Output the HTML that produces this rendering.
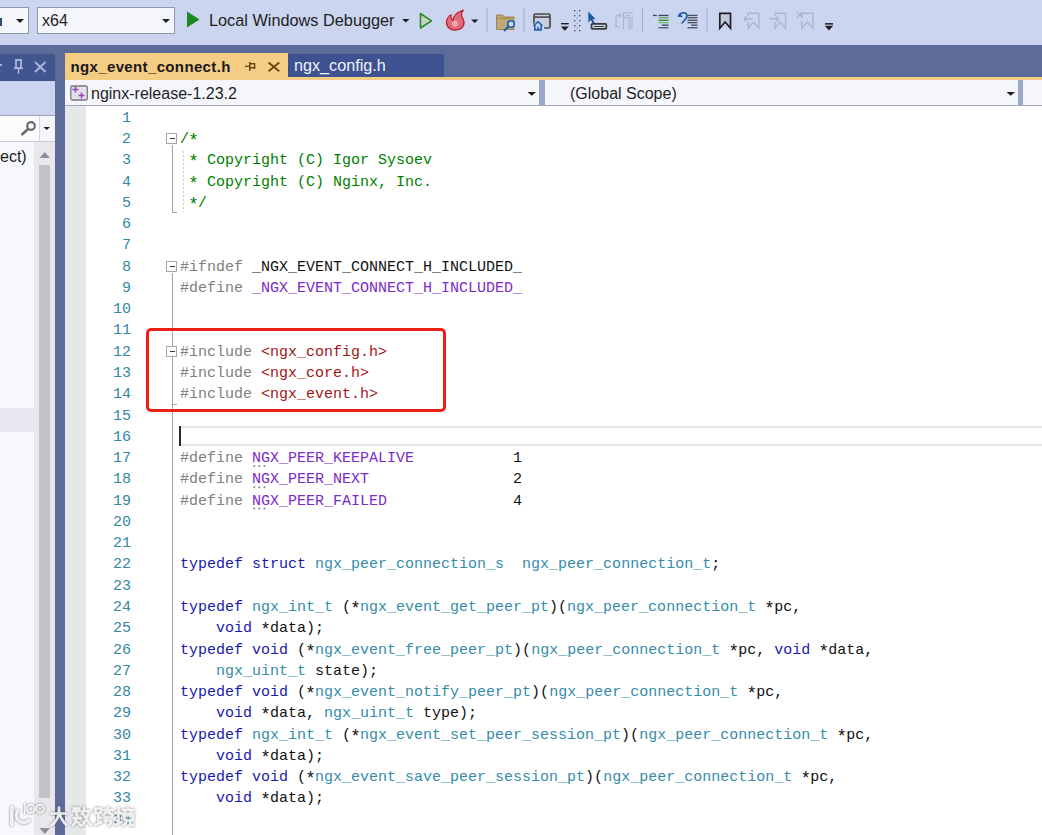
<!DOCTYPE html>
<html><head><meta charset="utf-8">
<style>
*{margin:0;padding:0;box-sizing:border-box}
html,body{width:1042px;height:835px;overflow:hidden;background:#5D6B99;position:relative;font-family:"Liberation Sans",sans-serif}
.a{position:absolute}
#tb{left:0;top:0;width:1042px;height:45px;background:#CCD5F0}
.combo{position:absolute;background:#F5F6FB;border:1px solid #8F97AE}
.arr{position:absolute;width:0;height:0;border-left:4px solid transparent;border-right:4px solid transparent;border-top:4px solid #1E1E1E}
.sep{position:absolute;width:1px;background:#A6AFCC}
.ui{position:absolute;font-size:16px;color:#1E1E1E;white-space:nowrap;line-height:20px}
/* editor */
#ed{left:65px;top:106px;width:977px;height:729px;background:#FFFFFF}
#mg{left:65px;top:106px;width:21px;height:729px;background:#E6E7E8}
.ln{position:absolute;left:86px;width:45px;text-align:right;font-family:"Liberation Mono",monospace;font-size:15px;line-height:21.27px;color:#3487A4;white-space:pre}
.cl{position:absolute;left:180px;font-family:"Liberation Mono",monospace;font-size:15px;line-height:21.27px;white-space:pre;color:#000}
.cm{color:#008000}.pp{color:#808080}.mc{color:#7A2BC8}.st{color:#A31515}.kw{color:#1A1AAA}.ty{color:#368CAA}.tx{color:#111}
.as{font-style:normal;display:inline-block;width:9px;text-align:center;font-size:17.5px;line-height:0;vertical-align:baseline;position:relative;top:3px;left:-0.8px}
.ob{position:absolute;width:11px;height:11px;border:1px solid #A8A8A8;background:#fff}
.ob:after{content:"";position:absolute;left:2.5px;top:4px;width:5px;height:1.3px;background:#3A3A3A}
</style></head><body>

<!-- toolbar -->
<div id="tb" class="a"></div>
<div class="combo" style="left:-10px;top:7px;width:39px;height:27px"></div>
<div class="a" style="left:0;top:18px;width:1.6px;height:8px;background:#2C4A80"></div>
<div class="arr" style="left:16px;top:19px"></div>
<div class="combo" style="left:37px;top:7px;width:138px;height:27px"></div>
<div class="ui" style="left:42px;top:11px">x64</div>
<div class="arr" style="left:162px;top:19px"></div>

<svg class="a" style="left:0;top:0" width="1042" height="45" viewBox="0 0 1042 45">
  <!-- solid play -->
  <path d="M187 11.5 L199.5 19.5 L187 27.5 Z" fill="#1E8A1E"/>
  <!-- outline play -->
  <path d="M420.5 13.5 L431.5 20.8 L420.5 28 Z" fill="#C5D2C8" stroke="#2A8A2A" stroke-width="1.6" stroke-linejoin="round"/>
  <!-- flame -->
  <path d="M455 30 C449 30 446 25.5 446.5 21.5 C447 18 449.5 15.5 451 15 C450.5 17.5 451.5 19.5 453 20.5 C453 16 456.5 12.5 463.5 10 C460.5 13 461 16 463 19 C465 22.5 464.5 30 455 30 Z" fill="#E06C7A" stroke="#C0202E" stroke-width="1.3"/>
  <circle cx="455" cy="23.5" r="3" fill="#F0A5AE"/>
  <!-- separators -->
  <rect x="486.5" y="8" width="1" height="24" fill="#A0AAC8"/>
  <rect x="523.5" y="8" width="1" height="24" fill="#A0AAC8"/>
  <rect x="642" y="8" width="1" height="24" fill="#A0AAC8"/>
  <rect x="706.5" y="8" width="1" height="24" fill="#A0AAC8"/>
  <!-- folder -->
  <path d="M496.5 15 h6 l2 2 h9.5 v12.5 h-17.5 z" fill="#BFA878" stroke="#9A8450" stroke-width="1"/>
  <rect x="496.5" y="17.5" width="17.5" height="1.5" fill="#A89058"/>
  <circle cx="511" cy="24" r="3.3" fill="#CCD5F0" stroke="#1E5AA8" stroke-width="1.6"/>
  <path d="M508.5 26.5 L504 31" stroke="#1E5AA8" stroke-width="1.8"/>
  <!-- window + house -->
  <rect x="534" y="14" width="16" height="14" rx="1.5" fill="#C9CEDF" stroke="#4A4A4A" stroke-width="1.7"/>
  <rect x="534" y="16.3" width="16" height="1.6" fill="#4A4A4A"/>
  <path d="M533 25.8 L538 21.5 L543 25.8 V30.5 H533 Z" fill="#BBD3F0" stroke="#CCD5F0" stroke-width="2.2"/>
  <path d="M533.5 25.8 L538 21.8 L542.5 25.8 M534.8 25 V30 H541.2 V25" fill="#BBD3F0" stroke="#1E5AA8" stroke-width="1.5"/>
  <rect x="537.2" y="26.8" width="1.6" height="3.2" fill="#1E5AA8"/>
  <!-- overflow small -->
  <rect x="561" y="23" width="7.7" height="1.4" fill="#1E1E1E"/>
  <path d="M560.8 26.6 h8 l-4 4.2 z" fill="#1E1E1E"/>
  <!-- gripper -->
  <g fill="#50545E">
    <rect x="574" y="10" width="1.4" height="1.4"/><rect x="579" y="10" width="1.4" height="1.4"/>
    <rect x="574" y="15" width="1.4" height="1.4"/><rect x="579" y="15" width="1.4" height="1.4"/>
    <rect x="574" y="20" width="1.4" height="1.4"/><rect x="579" y="20" width="1.4" height="1.4"/>
    <rect x="574" y="25" width="1.4" height="1.4"/><rect x="579" y="25" width="1.4" height="1.4"/>
    <rect x="574" y="30" width="1.4" height="1.4"/><rect x="579" y="30" width="1.4" height="1.4"/>
  </g>
  <g fill="#9AA6CC">
    <rect x="576.5" y="12.5" width="1.4" height="1.4"/><rect x="576.5" y="17.5" width="1.4" height="1.4"/>
    <rect x="576.5" y="22.5" width="1.4" height="1.4"/><rect x="576.5" y="27.5" width="1.4" height="1.4"/>
  </g>
  <!-- cursor icon -->
  <path d="M588.3 11.5 L588.3 22.5 L590.8 20 L593.3 24.5 L595 23.6 L592.6 19.2 L595.6 19 Z" fill="#1E5AA8"/>
  <rect x="591.5" y="23.8" width="14.8" height="5" rx="1" fill="#CCD5F0" stroke="#3A3A3A" stroke-width="1.8"/>
  <rect x="594" y="26" width="10" height="1" fill="#3A3A3A"/>
  <!-- disabled -->
  <g stroke="#AEB6CC" stroke-width="1.3" fill="none">
    <path d="M619.8 26.6 H616 V15.6 H620.5"/><path d="M619 13.3 L621.3 15.6 L619 17.9"/>
    <path d="M623.5 29.5 V12.8 H633"/>
    <path d="M625.5 15.6 h5 M623.5 17.8 h9.5 M628 20.5 h5 M628 22.9 h5 M628 25.5 h5 M628 27.9 h5"/>
  </g>
  <!-- indent icon -->
  <g>
    <rect x="653" y="14.8" width="3.8" height="1.3" fill="#3E4250"/>
    <rect x="658.5" y="14.8" width="10" height="1.3" fill="#3E4250"/>
    <rect x="658.5" y="17.1" width="10" height="1.3" fill="#5CA85C"/>
    <rect x="658.5" y="19.7" width="10" height="1.3" fill="#2E8A2E"/>
    <rect x="658.5" y="22" width="10" height="1.3" fill="#6CC06C"/>
    <rect x="662" y="24.5" width="6.5" height="1.3" fill="#3E4250"/>
    <rect x="658.5" y="27.1" width="10" height="1.3" fill="#50586A"/>
  </g>
  <!-- undo-ish icon -->
  <path d="M679 15.5 C681 12 686.5 11.5 687 15.5 C687.3 18 684.5 20.5 681.5 23.5" stroke="#1E5AA8" stroke-width="1.6" fill="none"/>
  <path d="M677.5 16.8 L683 17.3 L679.5 13 Z" fill="#1E5AA8"/>
  <g fill="#4A4E5C">
    <rect x="687.5" y="14.8" width="10" height="1.3"/><rect x="687.5" y="17.1" width="10" height="1.3"/>
    <rect x="687.5" y="19.7" width="10" height="1.3"/><rect x="687.5" y="22" width="10" height="1.3"/>
    <rect x="691" y="24.5" width="6.5" height="1.3"/><rect x="687.5" y="27.1" width="10" height="1.3"/>
  </g>
  <!-- bookmark -->
  <path d="M719.8 13.3 H730.5 V28.3 L725.15 22 L719.8 28.3 Z" fill="#C3C9DE" stroke="#1E1E1E" stroke-width="1.7" stroke-linejoin="miter"/>
  <!-- disabled bookmarks -->
  <g stroke="#AEB6CC" stroke-width="1.4" fill="none">
    <path d="M748.2 16 V13.3 H758.8 V28.3 L753.5 22 L748.2 28.3 V21.5"/><path d="M744 18.7 h9 M744 18.7 l2.5 -2.5 M744 18.7 l2.5 2.5"/>
    <path d="M775 16 V13.3 H785.6 V28.3 L780.3 22 L775 28.3 V21.5"/><path d="M769.5 18.7 h9.5 M779 18.7 l-2.5 -2.5 M779 18.7 l-2.5 2.5"/>
    <path d="M801.8 18 V13.3 H813 V28.3 L807.4 22 L801.8 28.3 V21"/><path d="M797 12 l5.5 5.5 M802.5 12 l-5.5 5.5"/>
  </g>
  <!-- overflow end -->
  <rect x="825" y="23.1" width="8" height="1.5" fill="#1E1E1E"/>
  <path d="M824.8 25.8 h8.4 l-4.2 4.8 z" fill="#1E1E1E"/>
  <!-- dropdown arrows -->
  <path d="M402 19 h7.5 l-3.75 3.5 z" fill="#1E1E1E"/>
  <path d="M471 19.5 h7.5 l-3.75 3.5 z" fill="#1E1E1E"/>
</svg>
<div class="ui" style="left:209px;top:10px;font-size:16.3px">Local Windows Debugger</div>

<!-- tab well -->
<div class="a" style="left:0;top:54px;width:55px;height:26.5px;background:#41558F"></div>
<svg class="a" style="left:0;top:54px" width="55" height="27" viewBox="0 54 55 27">
  <path d="M-1 64 h3.5 l-1.75 2.5 z" fill="#AEB8E0"/>
  <rect x="16" y="60" width="5" height="8" fill="none" stroke="#AEB8E0" stroke-width="1.8"/>
  <rect x="14" y="67.5" width="9" height="1.6" fill="#AEB8E0"/>
  <rect x="17.8" y="69" width="1.4" height="5" fill="#AEB8E0"/>
  <path d="M35 62 L45.5 72 M45.5 62 L35 72" stroke="#AEB8E0" stroke-width="1.8"/>
</svg>
<div class="a" style="left:65px;top:53px;width:223px;height:27px;background:#F5CC84"></div>
<div class="ui" style="left:70.5px;top:57px;font-weight:bold;font-size:15px;letter-spacing:0.36px;color:#1A1A1A">ngx_event_connect.h</div>
<svg class="a" style="left:240px;top:55px" width="48" height="22" viewBox="240 55 48 22">
  <path d="M245 66.3 h4.5" stroke="#6A4810" stroke-width="1.3"/>
  <path d="M250 63.8 H254.6 V67.8 H250" fill="none" stroke="#6A4810" stroke-width="1.4"/>
  <rect x="253.8" y="66.8" width="1.5" height="2" fill="#6A4810"/>
  <rect x="249" y="62" width="1.6" height="8.8" fill="#6A4810"/>
  <path d="M268.6 62.6 L279.2 71.3 M279.2 62.6 L268.6 71.3" stroke="#6A4810" stroke-width="1.9"/>
</svg>
<div class="a" style="left:288px;top:54px;width:156px;height:24px;background:#3E5191"></div>
<div class="ui" style="left:294px;top:55.3px;color:#F0F2FA;font-size:16.2px">ngx_config.h</div>
<div class="a" style="left:65px;top:77px;width:977px;height:3px;background:#F5CC84"></div>

<!-- left panel -->
<div class="a" style="left:0;top:80.5px;width:55px;height:35px;background:#CCD5F0"></div>
<div class="a" style="left:0;top:115px;width:55px;height:27px;background:#FCFCFC;border-top:1px solid #9AA2B8;border-bottom:1px solid #C8CEE2"></div>
<div class="a" style="left:39px;top:116px;width:1px;height:25px;background:#D4D6E0"></div>
<div class="a" style="left:40px;top:116px;width:15px;height:25px;background:#F5F6FB"></div>
<svg class="a" style="left:0;top:115px" width="55" height="27" viewBox="0 115 55 27">
  <circle cx="31" cy="126" r="3.8" fill="none" stroke="#6A6A6A" stroke-width="2.2"/>
  <path d="M28 129 L21.5 135" stroke="#6A6A6A" stroke-width="2.6"/>
  <path d="M43.5 127 h6.5 l-3.25 3 z" fill="#1E1E1E"/>
</svg>
<div class="a" style="left:0;top:142px;width:55px;height:693px;background:#F6F8FD"></div>
<div class="ui" style="left:0px;top:147px;font-size:16px">ect)</div>
<div class="a" style="left:0;top:408px;width:34px;height:24px;background:#E6E7F0"></div>
<div class="a" style="left:34px;top:142px;width:21px;height:693px;background:#E8E8EC"></div>
<div class="a" style="left:39px;top:165px;width:11px;height:632.5px;background:#C2C3C9"></div>
<svg class="a" style="left:34px;top:145px" width="21" height="15" viewBox="34 145 21 15"><path d="M39.5 158 L50 158 L44.75 152 Z" fill="#8C8FA0"/></svg>
<svg class="a" style="left:34px;top:825px" width="21" height="10" viewBox="34 825 21 10"><path d="M39.5 828 L50 828 L44.75 834 Z" fill="#8C8FA0"/></svg>

<!-- nav bar -->
<div class="a" style="left:65px;top:80px;width:977px;height:26px;background:#F5F6FB;border-bottom:1.5px solid #A0A7BC"></div>
<div class="a" style="left:539px;top:80px;width:5.5px;height:25px;background:#99A8CC"></div>
<div class="a" style="left:1018.3px;top:80px;width:5px;height:25px;background:#99A8CC"></div>
<svg class="a" style="left:65px;top:80px" width="977" height="26" viewBox="65 80 977 26">
  <rect x="70.8" y="86" width="16.5" height="14" rx="1.5" fill="#E2E2E8" stroke="#7A7A7A" stroke-width="1.3"/>
  <path d="M75.5 86.5 v6 M72.5 89.5 h6 M81.5 92.5 v6 M78.5 95.5 h6" stroke="#A040C0" stroke-width="1.5"/>
  <path d="M527.5 92 h8.5 l-4.25 3.8 z" fill="#1E1E1E"/>
  <path d="M1006.5 92 h8.5 l-4.25 3.8 z" fill="#1E1E1E"/>
</svg>
<div class="ui" style="left:91px;top:84px">nginx-release-1.23.2</div>
<div class="ui" style="left:570px;top:84px">(Global Scope)</div>

<!-- editor -->
<div id="ed" class="a"></div>
<div id="mg" class="a"></div>

<!-- outlining -->
<div class="ob" style="left:166px;top:133px"></div>
<div class="a" style="left:172px;top:145px;width:1px;height:67px;background:#A5A5A5"></div>
<div class="a" style="left:172px;top:211.5px;width:5px;height:1px;background:#A5A5A5"></div>
<div class="a" style="left:183px;top:151px;width:1px;height:61px;background-image:linear-gradient(#C8C8C8 50%,transparent 50%);background-size:1px 4px"></div>
<div class="ob" style="left:166px;top:260.5px"></div>
<div class="a" style="left:172px;top:272.5px;width:1px;height:563px;background:#A5A5A5"></div>
<div class="ob" style="left:166px;top:345.5px"></div>
<div class="a" style="left:172px;top:404px;width:5px;height:1px;background:#A5A5A5"></div>

<!-- current line -->
<div class="a" style="left:180px;top:426px;width:870px;height:20px;border-top:2px solid #E3E3EA;border-bottom:2px solid #E3E3EA"></div>
<div class="a" style="left:179px;top:426px;width:2px;height:20px;background:#2A2A2A"></div>

<div class="ln" style="top:107.77px">1</div>
<div class="ln" style="top:129.04px">2</div>
<div class="cl" style="top:129.04px"><span class="cm">/<i class="as">*</i></span></div>
<div class="ln" style="top:150.31px">3</div>
<div class="cl" style="top:150.31px"><span class="cm"> <i class="as">*</i> Copyright (C) Igor Sysoev</span></div>
<div class="ln" style="top:171.58px">4</div>
<div class="cl" style="top:171.58px"><span class="cm"> <i class="as">*</i> Copyright (C) Nginx, Inc.</span></div>
<div class="ln" style="top:192.85px">5</div>
<div class="cl" style="top:192.85px"><span class="cm"> <i class="as">*</i>/</span></div>
<div class="ln" style="top:214.12px">6</div>
<div class="ln" style="top:235.39px">7</div>
<div class="ln" style="top:256.66px">8</div>
<div class="cl" style="top:256.66px"><span class="pp">#ifndef </span><span class="tx">_NGX_EVENT_CONNECT_H_INCLUDED_</span></div>
<div class="ln" style="top:277.93px">9</div>
<div class="cl" style="top:277.93px"><span class="pp">#define </span><span class="mc">_NGX_EVENT_CONNECT_H_INCLUDED_</span></div>
<div class="ln" style="top:299.20px">10</div>
<div class="ln" style="top:320.47px">11</div>
<div class="ln" style="top:341.74px">12</div>
<div class="cl" style="top:341.74px"><span class="pp">#include </span><span class="st">&lt;ngx_config.h&gt;</span></div>
<div class="ln" style="top:363.01px">13</div>
<div class="cl" style="top:363.01px"><span class="pp">#include </span><span class="st">&lt;ngx_core.h&gt;</span></div>
<div class="ln" style="top:384.28px">14</div>
<div class="cl" style="top:384.28px"><span class="pp">#include </span><span class="st">&lt;ngx_event.h&gt;</span></div>
<div class="ln" style="top:405.55px">15</div>
<div class="ln" style="top:426.82px">16</div>
<div class="ln" style="top:448.09px">17</div>
<div class="cl" style="top:448.09px"><span class="pp">#define </span><span class="mc">NGX_PEER_KEEPALIVE</span><span class="tx">           1</span></div>
<div class="ln" style="top:469.36px">18</div>
<div class="cl" style="top:469.36px"><span class="pp">#define </span><span class="mc">NGX_PEER_NEXT</span><span class="tx">                2</span></div>
<div class="ln" style="top:490.63px">19</div>
<div class="cl" style="top:490.63px"><span class="pp">#define </span><span class="mc">NGX_PEER_FAILED</span><span class="tx">              4</span></div>
<div class="ln" style="top:511.90px">20</div>
<div class="ln" style="top:533.17px">21</div>
<div class="ln" style="top:554.44px">22</div>
<div class="cl" style="top:554.44px"><span class="kw">typedef</span><span class="tx"> </span><span class="kw">struct</span><span class="tx"> </span><span class="ty">ngx_peer_connection_s</span><span class="tx">  </span><span class="ty">ngx_peer_connection_t</span><span class="tx">;</span></div>
<div class="ln" style="top:575.71px">23</div>
<div class="ln" style="top:596.98px">24</div>
<div class="cl" style="top:596.98px"><span class="kw">typedef</span><span class="tx"> </span><span class="ty">ngx_int_t</span><span class="tx"> (<i class="as">*</i></span><span class="ty">ngx_event_get_peer_pt</span><span class="tx">)(</span><span class="ty">ngx_peer_connection_t</span><span class="tx"> <i class="as">*</i>pc,</span></div>
<div class="ln" style="top:618.25px">25</div>
<div class="cl" style="top:618.25px"><span class="tx">    </span><span class="kw">void</span><span class="tx"> <i class="as">*</i>data);</span></div>
<div class="ln" style="top:639.52px">26</div>
<div class="cl" style="top:639.52px"><span class="kw">typedef</span><span class="tx"> </span><span class="kw">void</span><span class="tx"> (<i class="as">*</i></span><span class="ty">ngx_event_free_peer_pt</span><span class="tx">)(</span><span class="ty">ngx_peer_connection_t</span><span class="tx"> <i class="as">*</i>pc, </span><span class="kw">void</span><span class="tx"> <i class="as">*</i>data,</span></div>
<div class="ln" style="top:660.79px">27</div>
<div class="cl" style="top:660.79px"><span class="tx">    </span><span class="ty">ngx_uint_t</span><span class="tx"> state);</span></div>
<div class="ln" style="top:682.06px">28</div>
<div class="cl" style="top:682.06px"><span class="kw">typedef</span><span class="tx"> </span><span class="kw">void</span><span class="tx"> (<i class="as">*</i></span><span class="ty">ngx_event_notify_peer_pt</span><span class="tx">)(</span><span class="ty">ngx_peer_connection_t</span><span class="tx"> <i class="as">*</i>pc,</span></div>
<div class="ln" style="top:703.33px">29</div>
<div class="cl" style="top:703.33px"><span class="tx">    </span><span class="kw">void</span><span class="tx"> <i class="as">*</i>data, </span><span class="ty">ngx_uint_t</span><span class="tx"> type);</span></div>
<div class="ln" style="top:724.60px">30</div>
<div class="cl" style="top:724.60px"><span class="kw">typedef</span><span class="tx"> </span><span class="ty">ngx_int_t</span><span class="tx"> (<i class="as">*</i></span><span class="ty">ngx_event_set_peer_session_pt</span><span class="tx">)(</span><span class="ty">ngx_peer_connection_t</span><span class="tx"> <i class="as">*</i>pc,</span></div>
<div class="ln" style="top:745.87px">31</div>
<div class="cl" style="top:745.87px"><span class="tx">    </span><span class="kw">void</span><span class="tx"> <i class="as">*</i>data);</span></div>
<div class="ln" style="top:767.14px">32</div>
<div class="cl" style="top:767.14px"><span class="kw">typedef</span><span class="tx"> </span><span class="kw">void</span><span class="tx"> (<i class="as">*</i></span><span class="ty">ngx_event_save_peer_session_pt</span><span class="tx">)(</span><span class="ty">ngx_peer_connection_t</span><span class="tx"> <i class="as">*</i>pc,</span></div>
<div class="ln" style="top:788.41px">33</div>
<div class="cl" style="top:788.41px"><span class="tx">    </span><span class="kw">void</span><span class="tx"> <i class="as">*</i>data);</span></div>
<div class="ln" style="top:809.68px">34</div>

<!-- intellisense dots -->
<svg class="a" style="left:250px;top:460px" width="20" height="52" viewBox="250 460 20 52">
  <g fill="#8A8A8A"><circle cx="254.3" cy="466.0" r="1.05"/><circle cx="259.3" cy="466.0" r="1.05"/><circle cx="264.4" cy="466.0" r="1.05"/><circle cx="254.3" cy="487.3" r="1.05"/><circle cx="259.3" cy="487.3" r="1.05"/><circle cx="264.4" cy="487.3" r="1.05"/><circle cx="254.3" cy="508.5" r="1.05"/><circle cx="259.3" cy="508.5" r="1.05"/><circle cx="264.4" cy="508.5" r="1.05"/></g>
</svg>

<!-- red annotation -->
<div class="a" style="left:146px;top:328px;width:299.5px;height:84.2px;border:3.8px solid #EC1F17;border-radius:5px"></div>


<!-- watermark -->
<svg class="a" style="left:0;top:795px" width="145" height="40" viewBox="0 795 145 40">
  <defs><filter id="sh" x="-20%" y="-40%" width="140%" height="180%">
    <feGaussianBlur in="SourceAlpha" stdDeviation="1.2"/><feOffset dx="0.2" dy="0.4" result="b"/>
    <feFlood flood-color="#404040" flood-opacity="1"/><feComposite in2="b" operator="in"/>
    <feMerge><feMergeNode/><feMergeNode in="SourceGraphic"/></feMerge></filter></defs>
  <g filter="url(#sh)" stroke="#FFFFFF" stroke-opacity="0.8" fill="none" stroke-width="2.6" stroke-linecap="round" stroke-linejoin="round">
    <path d="M11.9 807.5 L11.6 824.5" stroke-width="3.3"/>
    <path d="M18.7 809.9 A7.3 7.3 0 1 0 29.8 819.2" stroke-width="3.2" stroke-linecap="butt"/>
    <path d="M24.8 804 V813.5" stroke-width="1.6"/>
    <circle cx="30.6" cy="808.8" r="4" stroke-width="1.9"/>
    <circle cx="40" cy="808.8" r="4" stroke-width="1.9"/>
    <path d="M51.5 813.5 H66.5 M59 807.5 V813 Q58 820 51.5 825.5 M59.5 814 Q62 821 66.5 825"/>
    <path d="M76.5 807.5 V815 M73 811 H80.5 M73.5 808 l1.5 2 M79.5 808 l-1.5 2 M73.5 818 H81 M77.5 816 Q76 822 73 825.5 M75 820.5 Q79 823 80.5 825.5"/>
    <path d="M84.5 807.5 Q83.5 812 82 814 M83 811 H90.5 M89 811 Q87 820 82 825.5 M84 815 Q87 821 90.5 825"/>
    <path d="M95.5 808.5 h5.5 v4.5 h-5.5 z M98.3 813 V823.5 M98.3 818 H101 M95 825 L101.5 822"/>
    <path d="M103.5 810 H112.5 M108 807.5 Q107 812 103.5 815 M108 811 Q110 814 112.5 815 M104.5 817.5 H112 M104.5 820.5 H111 Q111 824 109 825.5 M106.5 817.5 L105.5 822"/>
    <path d="M116 813 H121 M118.5 808 V823.5 M115.5 825 L121.5 822"/>
    <path d="M127.8 807.5 v2 M123 810 H133.5 M124.5 811 l1 2.5 M131.5 811 l-1 2.5 M123 814 H133.5 M124.5 815.5 h8.5 v5 h-8.5 z M126.5 820.5 Q126 824 123 825.5 M130 820.5 V825 H134"/>
  </g>
</svg>

</body></html>
